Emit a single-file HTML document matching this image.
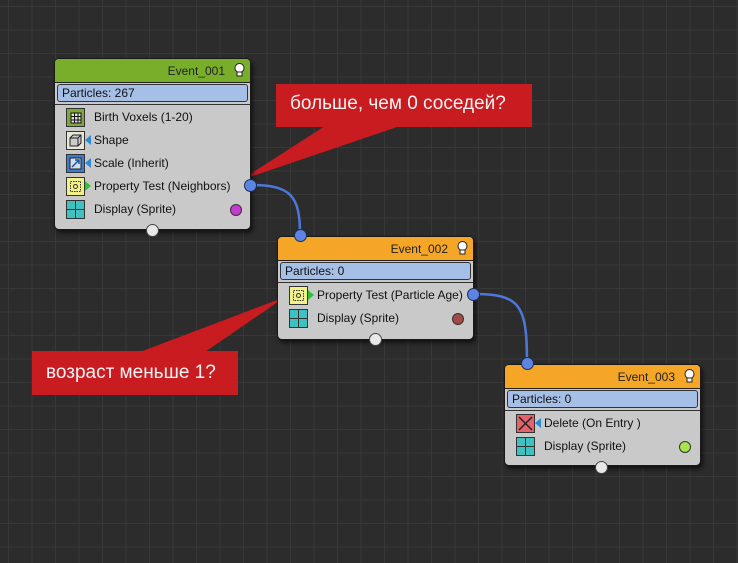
<!DOCTYPE html>
<html><head><meta charset="utf-8"><style>
*{margin:0;padding:0;box-sizing:border-box}
body{width:738px;height:563px;overflow:hidden;background-color:#2c2c2c;
background-image:linear-gradient(to right,#383838 1px,transparent 1px),linear-gradient(to bottom,#383838 1px,transparent 1px);
background-size:23.5px 23.5px;background-position:8px 6px;
font-family:"Liberation Sans","DejaVu Sans",sans-serif;position:relative}
.node{position:absolute;width:197px;background:#c9c9c9;border:1px solid #1a1a1a;border-radius:5px;box-shadow:2px 3px 4px rgba(0,0,0,.6)}
.hd{height:24px;border-radius:4px 4px 0 0;position:relative;font-size:12px;color:#222;text-align:right;padding:5px 25px 0 0;border-bottom:1px solid #222}
.bulb{position:absolute;right:5px;top:4px;width:11px;height:14px}
.bar{position:absolute;left:2px;right:2px;top:25px;height:18px;background:#a6bfe6;border:1px solid #333;border-radius:3px;font-size:12px;color:#111;padding:1px 0 0 4px}
.rows{position:absolute;left:0;right:0}
.row{height:23px;position:relative;font-size:12px;color:#111}
.row span{position:absolute;left:39px;top:4px;white-space:nowrap}
.ic{position:absolute;left:11px;top:2px;width:19px;height:19px;border:1px solid #333}
.dot{position:absolute;width:12px;height:12px;border-radius:50%;border:1px solid #333}
.port{position:absolute;width:13px;height:13px;border-radius:50%;background:#5b85e0;border:1px solid #1d2a55}
.bp{position:absolute;width:13px;height:13px;border-radius:50%;background:#e8e8e8;border:1px solid #444}
.sep{position:absolute;left:0;right:0;height:1px;background:#333}
.callout{position:absolute;background:#c81c20;color:#f4f4f4;font-size:19px;padding:9px 0 0 14px}
</style></head><body>
<svg width="738" height="563" style="position:absolute;left:0;top:0">
<path d="M251 185 C290 185 300 195 300 234" stroke="#4d78d8" stroke-width="2.5" fill="none"/>
<path d="M474 294 C520 294 527 305 527 362" stroke="#4d78d8" stroke-width="2.5" fill="none"/>
<polygon points="325,126 400,126 241,180" fill="#c81c20"/>
<polygon points="140,352 205,352 285,297" fill="#c81c20"/>
</svg>
<div class="callout" style="left:276px;top:84px;width:256px;height:43px">больше, чем 0 соседей?</div>
<div class="callout" style="left:32px;top:351px;width:206px;height:44px;padding-top:11px">возраст меньше 1?</div>

<!-- node 1 -->
<div class="node" style="left:54px;top:58px;height:172px">
<div class="hd" style="background:#79ae2b">Event_001<svg class="bulb" viewBox="0 0 11 14"><circle cx="5.5" cy="5" r="4.5" fill="#fff" stroke="#222"/><rect x="3" y="9" width="5" height="4" fill="#fff" stroke="#222"/></svg></div>
<div class="bar">Particles: 267</div>
<div class="sep" style="top:45px"></div>
<div class="rows" style="top:47px">
<div class="row"><div class="ic" style="background:#7fa73c"><svg width="17" height="17"><path d="M4 4h10v10H4zM4 7.5h10M4 11h10M7.5 4v10M11 4v10" stroke="#111" fill="#ddd" stroke-width="1"/></svg></div><span>Birth Voxels (1-20)</span></div>
<div class="row"><div class="ic" style="background:#e8e8d8"><svg width="17" height="17"><path d="M3 6h8v8H3zM3 6l3-3h8v8l-3 3M11 6l3-3" stroke="#222" fill="#ccc"/></svg></div><svg style="position:absolute;left:30px;top:6px" width="6" height="10"><path d="M6 0L0 5L6 10z" fill="#2a8ad8"/></svg><span>Shape</span></div>
<div class="row"><div class="ic" style="background:#3b7bd0"><svg width="17" height="17"><rect x="3" y="3" width="11" height="11" fill="#cfe0f0" stroke="#222"/><path d="M5 12L12 5M8 5h4v4" stroke="#1a55a8" fill="none" stroke-width="1.5"/></svg></div><svg style="position:absolute;left:30px;top:6px" width="6" height="10"><path d="M6 0L0 5L6 10z" fill="#2a8ad8"/></svg><span>Scale (Inherit)</span></div>
<div class="row"><div class="ic" style="background:#f1f18a"><svg width="17" height="17"><rect x="3.5" y="3.5" width="10" height="10" fill="none" stroke="#333" stroke-dasharray="1.5 1"/><circle cx="8.5" cy="8.5" r="2" fill="none" stroke="#333"/></svg></div><svg style="position:absolute;left:30px;top:6px" width="6" height="10"><path d="M0 0L6 5L0 10z" fill="#2cc23a"/></svg><span>Property Test (Neighbors)</span></div>
<div class="row"><div class="ic" style="background:#3fc1c1"><svg width="17" height="17"><path d="M8.5 0v17M0 8.5h17" stroke="#333"/></svg></div><span>Display (Sprite)</span><div class="dot" style="left:175px;top:6px;background:#c73bd0"></div></div>
</div>
</div>
<div class="port" style="left:244px;top:179px"></div>
<div class="bp" style="left:146px;top:224px"></div>

<!-- node 2 -->
<div class="node" style="left:277px;top:236px;height:104px">
<div class="hd" style="background:#f6a626">Event_002<svg class="bulb" viewBox="0 0 11 14"><circle cx="5.5" cy="5" r="4.5" fill="#fff" stroke="#222"/><rect x="3" y="9" width="5" height="4" fill="#fff" stroke="#222"/></svg></div>
<div class="bar">Particles: 0</div>
<div class="sep" style="top:45px"></div>
<div class="rows" style="top:47px">
<div class="row"><div class="ic" style="background:#f1f18a"><svg width="17" height="17"><rect x="3.5" y="3.5" width="10" height="10" fill="none" stroke="#333" stroke-dasharray="1.5 1"/><circle cx="8.5" cy="8.5" r="2" fill="none" stroke="#333"/></svg></div><svg style="position:absolute;left:30px;top:6px" width="6" height="10"><path d="M0 0L6 5L0 10z" fill="#2cc23a"/></svg><span>Property Test (Particle Age)</span></div>
<div class="row"><div class="ic" style="background:#3fc1c1"><svg width="17" height="17"><path d="M8.5 0v17M0 8.5h17" stroke="#333"/></svg></div><span>Display (Sprite)</span><div class="dot" style="left:174px;top:6px;background:#a24a44"></div></div>
</div>
</div>
<div class="port" style="left:294px;top:229px"></div>
<div class="port" style="left:467px;top:288px"></div>
<div class="bp" style="left:369px;top:333px"></div>

<!-- node 3 -->
<div class="node" style="left:504px;top:364px;height:102px">
<div class="hd" style="background:#f6a626">Event_003<svg class="bulb" viewBox="0 0 11 14"><circle cx="5.5" cy="5" r="4.5" fill="#fff" stroke="#222"/><rect x="3" y="9" width="5" height="4" fill="#fff" stroke="#222"/></svg></div>
<div class="bar">Particles: 0</div>
<div class="sep" style="top:45px"></div>
<div class="rows" style="top:47px">
<div class="row"><div class="ic" style="background:#e3636a"><svg width="17" height="17"><path d="M2 2L15 15M15 2L2 15" stroke="#222" stroke-width="1.5"/></svg></div><svg style="position:absolute;left:30px;top:6px" width="6" height="10"><path d="M6 0L0 5L6 10z" fill="#2a8ad8"/></svg><span>Delete (On Entry )</span></div>
<div class="row"><div class="ic" style="background:#3fc1c1"><svg width="17" height="17"><path d="M8.5 0v17M0 8.5h17" stroke="#333"/></svg></div><span>Display (Sprite)</span><div class="dot" style="left:174px;top:6px;background:#a7e34a"></div></div>
</div>
</div>
<div class="port" style="left:521px;top:357px"></div>
<div class="bp" style="left:595px;top:461px"></div>
</body></html>
